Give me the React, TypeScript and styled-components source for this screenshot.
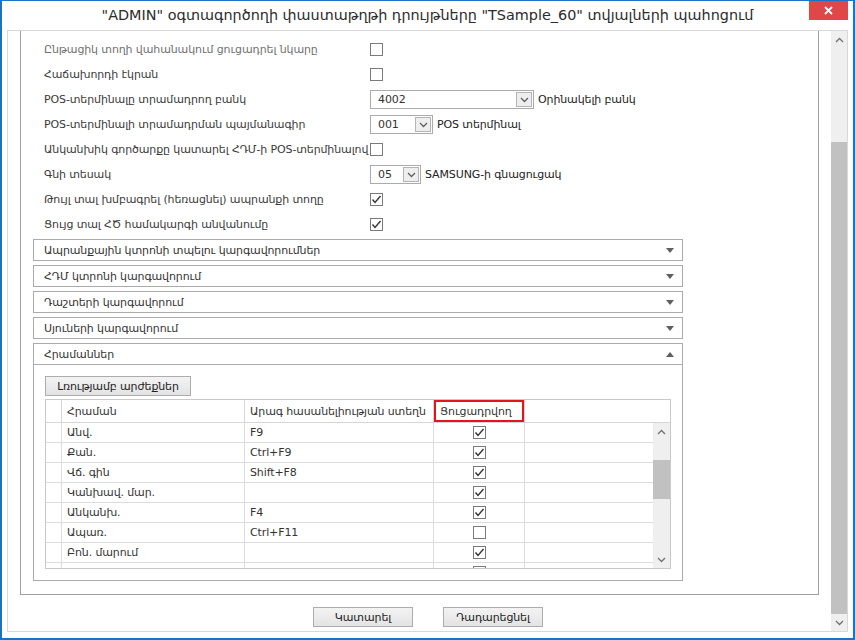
import React from "react";
import styled, { createGlobalStyle } from "styled-components";

const GlobalStyle = createGlobalStyle`
  html, body {
    margin: 0;
    padding: 0;
    background: #ffffff;
  }
  body {
    font-family: "DejaVu Sans", "Liberation Sans", sans-serif;
    font-size: 11px;
    letter-spacing: -0.12px;
    color: #3a3a3a;
  }
  * {
    box-sizing: border-box;
  }
`;

const Window = styled.div`
  width: 855px;
  height: 640px;
  border: 2px solid #1a73c8;
  border-top-width: 1px;
  background: #ffffff;
  display: flex;
  flex-direction: column;
  overflow: hidden;
`;

const TitleBar = styled.div`
  height: 29px;
  display: flex;
  align-items: flex-start;
  padding-left: 44px;
  flex-shrink: 0;
`;

const Title = styled.div`
  flex: 1;
  text-align: center;
  font-size: 14.4px;
  letter-spacing: 0;
  line-height: 29px;
  color: #2b2b2b;
  white-space: nowrap;
`;

const CloseButton = styled.div`
  width: 39px;
  height: 20px;
  margin-right: 5px;
  margin-top: -1px;
  background: #e04747;
  display: flex;
  align-items: center;
  justify-content: center;
`;

const Frame = styled.div`
  flex: 1;
  margin: 0 5px 6px 5px;
  border: 1px solid #d8d8d8;
  display: flex;
  min-height: 0;
`;

const Main = styled.div`
  flex: 1;
  display: flex;
  flex-direction: column;
  min-width: 0;
`;

const ScrollBox = styled.div`
  height: 564px;
  margin: 0 12px;
  border: 1px solid #a0a0a0;
  border-top: none;
  overflow: hidden;
  padding-top: 6px;
`;

const SettingRow = styled.div`
  height: 25px;
  display: grid;
  grid-template-columns: 326px auto;
  align-items: center;
  padding-left: 23px;
`;

const Label = styled.span<{ $muted?: boolean }>`
  color: ${(p) => (p.$muted ? "#707070" : "#3a3a3a")};
  white-space: nowrap;
`;

const Control = styled.div`
  display: flex;
  align-items: center;
  gap: 4px;
  color: #222;
  white-space: nowrap;
`;

const Box = styled.span`
  width: 13px;
  height: 13px;
  border: 1px solid #7a7a7a;
  background: #fff;
  display: inline-flex;
  align-items: center;
  justify-content: center;
  flex-shrink: 0;
`;

const Combo = styled.div<{ $w: number }>`
  width: ${(p) => p.$w}px;
  height: 19px;
  border: 1px solid #ababab;
  background: #fff;
  display: flex;
  align-items: center;
  padding: 1px 1px 1px 7px;
`;

const ComboText = styled.span`
  flex: 1;
  color: #333;
`;

const ComboArrow = styled.span`
  width: 16px;
  height: 15px;
  border: 1px solid #b4b4b4;
  background: #eeeeee;
  display: flex;
  align-items: center;
  justify-content: center;
`;

const Accordion = styled.div`
  margin: 2px 0 0 12px;
  width: 650px;
  display: flex;
  flex-direction: column;
  gap: 4px;
`;

const PanelHeader = styled.div`
  height: 22px;
  border: 1px solid #ababab;
  display: flex;
  align-items: center;
  justify-content: space-between;
  padding: 0 8px 0 10px;
  color: #333;
`;

const Triangle = styled.span<{ $up?: boolean }>`
  width: 0;
  height: 0;
  border-left: 4px solid transparent;
  border-right: 4px solid transparent;
  ${(p) =>
    p.$up
      ? "border-bottom: 5px solid #606060;"
      : "border-top: 5px solid #606060;"}
`;

const Expanded = styled.div`
  display: flex;
  flex-direction: column;
`;

const PanelBody = styled.div`
  border: 1px solid #ababab;
  border-top: none;
  padding: 11px 0 11px 11px;
  display: flex;
  flex-direction: column;
  gap: 3px;
`;

const PushButton = styled.div<{ $w: number }>`
  width: ${(p) => p.$w}px;
  height: 20px;
  border: 1px solid #acacac;
  background: linear-gradient(#f3f3f3, #e3e3e3);
  display: flex;
  align-items: center;
  justify-content: center;
  color: #222;
`;

const Grid = styled.div`
  width: 626px;
  height: 170px;
  border: 1px solid #c9c9c9;
  display: flex;
  flex-direction: column;
  overflow: hidden;
`;

const HeaderRow = styled.div`
  height: 23px;
  display: grid;
  grid-template-columns: 16px 183px 189px 91px 1fr;
  border-bottom: 1px solid #d6d6d6;
  flex-shrink: 0;
`;

const HeadCell = styled.div<{ $marked?: boolean }>`
  border-right: 1px solid #d6d6d6;
  display: flex;
  align-items: center;
  padding-left: 5px;
  color: #333;
  white-space: nowrap;
  ${(p) => (p.$marked ? "box-shadow: inset 0 0 0 2px #e3141c; padding-left: 6px;" : "")}
  &:last-child {
    border-right: none;
  }
`;

const GridBody = styled.div`
  flex: 1;
  display: flex;
  min-height: 0;
`;

const Rows = styled.div`
  flex: 1;
  overflow: hidden;
`;

const Row = styled.div`
  height: 20px;
  display: grid;
  grid-template-columns: 16px 183px 189px 91px 1fr;
  border-bottom: 1px solid #dcdcdc;
`;

const Cell = styled.div<{ $center?: boolean }>`
  border-right: 1px solid #dcdcdc;
  display: flex;
  align-items: center;
  justify-content: ${(p) => (p.$center ? "center" : "flex-start")};
  padding-left: ${(p) => (p.$center ? 0 : 5)}px;
  color: #333;
  white-space: nowrap;
  &:last-child {
    border-right: none;
  }
`;

const VScroll = styled.div<{ $w: number }>`
  width: ${(p) => p.$w}px;
  background: #efefef;
  display: flex;
  flex-direction: column;
  flex-shrink: 0;
`;

const ScrollArrow = styled.div`
  height: 17px;
  display: flex;
  align-items: center;
  justify-content: center;
  flex-shrink: 0;
`;

const Track = styled.div`
  flex: 1;
  min-height: 0;
`;

const Thumb = styled.div<{ $top: number; $h: number }>`
  margin-top: ${(p) => p.$top}px;
  height: ${(p) => p.$h}px;
  background: #c1c1c1;
`;

const Footer = styled.div`
  display: flex;
  justify-content: center;
  gap: 30px;
  padding-left: 17px;
  margin-top: 12px;
`;

const Check = () => (
  <svg width="11" height="11" viewBox="0 0 11 11">
    <polyline points="1.5,5.5 4,8.5 9.5,2" fill="none" stroke="#333" strokeWidth="1.4" />
  </svg>
);

const CheckBox = ({ checked }: { checked?: boolean }) => <Box>{checked && <Check />}</Box>;

const Chevron = ({ up, color = "#606060" }: { up?: boolean; color?: string }) => (
  <svg width="9" height="6" viewBox="0 0 9 6">
    <polyline
      points={up ? "1,5 4.5,1.5 8,5" : "1,1 4.5,4.5 8,1"}
      fill="none"
      stroke={color}
      strokeWidth="1.3"
    />
  </svg>
);

const Select = ({ w, value }: { w: number; value: string }) => (
  <Combo $w={w}>
    <ComboText>{value}</ComboText>
    <ComboArrow>
      <Chevron />
    </ComboArrow>
  </Combo>
);

const panels = [
  "Ապրանքային կտրոնի տպելու կարգավորումներ",
  "ՀԴՄ կտրոնի կարգավորում",
  "Դաշտերի կարգավորում",
  "Սյուների կարգավորում",
];

const commands: [string, string, boolean][] = [
  ["Անվ.", "F9", true],
  ["Քան.", "Ctrl+F9", true],
  ["Վճ. գին", "Shift+F8", true],
  ["Կանխավ. մար.", "", true],
  ["Անկանխ.", "F4", true],
  ["Ապառ.", "Ctrl+F11", false],
  ["Բոն. մարում", "", true],
  ["", "", true],
];

export default function App() {
  return (
    <>
      <GlobalStyle />
      <Window>
        <TitleBar>
          <Title>"ADMIN" օգտագործողի փաստաթղթի դրույթները "TSample_60" տվյալների պահոցում</Title>
          <CloseButton>
            <svg width="9" height="9" viewBox="0 0 9 9">
              <path d="M1 1L8 8M8 1L1 8" stroke="#fff" strokeWidth="1.8" />
            </svg>
          </CloseButton>
        </TitleBar>
        <Frame>
          <Main>
            <ScrollBox>
              <SettingRow>
                <Label $muted>Ընթացիկ տողի վահանակում ցուցադրել նկարը</Label>
                <Control>
                  <CheckBox />
                </Control>
              </SettingRow>
              <SettingRow>
                <Label>Հաճախորդի էկրան</Label>
                <Control>
                  <CheckBox />
                </Control>
              </SettingRow>
              <SettingRow>
                <Label>POS-տերմինալը տրամադրող բանկ</Label>
                <Control>
                  <Select w={164} value="4002" />
                  Օրինակելի բանկ
                </Control>
              </SettingRow>
              <SettingRow>
                <Label>POS-տերմինալի տրամադրման պայմանագիր</Label>
                <Control>
                  <Select w={63} value="001" />
                  POS տերմինալ
                </Control>
              </SettingRow>
              <SettingRow>
                <Label>Անկանխիկ գործարքը կատարել ՀԴՄ-ի POS-տերմինալով</Label>
                <Control>
                  <CheckBox />
                </Control>
              </SettingRow>
              <SettingRow>
                <Label>Գնի տեսակ</Label>
                <Control>
                  <Select w={51} value="05" />
                  SAMSUNG-ի գնացուցակ
                </Control>
              </SettingRow>
              <SettingRow>
                <Label>Թույլ տալ խմբագրել (հեռացնել) ապրանքի տողը</Label>
                <Control>
                  <CheckBox checked />
                </Control>
              </SettingRow>
              <SettingRow>
                <Label>Ցույց տալ ՀԾ համակարգի անվանումը</Label>
                <Control>
                  <CheckBox checked />
                </Control>
              </SettingRow>

              <Accordion>
                {panels.map((p) => (
                  <PanelHeader key={p}>
                    {p}
                    <Triangle />
                  </PanelHeader>
                ))}
                <Expanded>
                  <PanelHeader>
                    Հրամաններ
                    <Triangle $up />
                  </PanelHeader>
                  <PanelBody>
                    <PushButton $w={146}>Լռությամբ արժեքներ</PushButton>
                    <Grid>
                      <HeaderRow>
                        <HeadCell />
                        <HeadCell>Հրաման</HeadCell>
                        <HeadCell>Արագ հասանելիության ստեղն</HeadCell>
                        <HeadCell $marked>Ցուցադրվող</HeadCell>
                        <HeadCell />
                      </HeaderRow>
                      <GridBody>
                        <Rows>
                          {commands.map(([name, key, on], i) => (
                            <Row key={i}>
                              <Cell />
                              <Cell>{name}</Cell>
                              <Cell>{key}</Cell>
                              <Cell $center>
                                <CheckBox checked={on} />
                              </Cell>
                              <Cell />
                            </Row>
                          ))}
                        </Rows>
                        <VScroll $w={17}>
                          <ScrollArrow>
                            <Chevron up color="#707070" />
                          </ScrollArrow>
                          <Track>
                            <Thumb $top={20} $h={39} />
                          </Track>
                          <ScrollArrow>
                            <Chevron color="#707070" />
                          </ScrollArrow>
                        </VScroll>
                      </GridBody>
                    </Grid>
                  </PanelBody>
                </Expanded>
              </Accordion>
            </ScrollBox>
            <Footer>
              <PushButton $w={100}>Կատարել</PushButton>
              <PushButton $w={100}>Դադարեցնել</PushButton>
            </Footer>
          </Main>
          <VScroll $w={16}>
            <ScrollArrow>
              <Chevron up color="#707070" />
            </ScrollArrow>
            <Track>
              <Thumb $top={94} $h={472} />
            </Track>
            <ScrollArrow>
              <Chevron color="#707070" />
            </ScrollArrow>
          </VScroll>
        </Frame>
      </Window>
    </>
  );
}
